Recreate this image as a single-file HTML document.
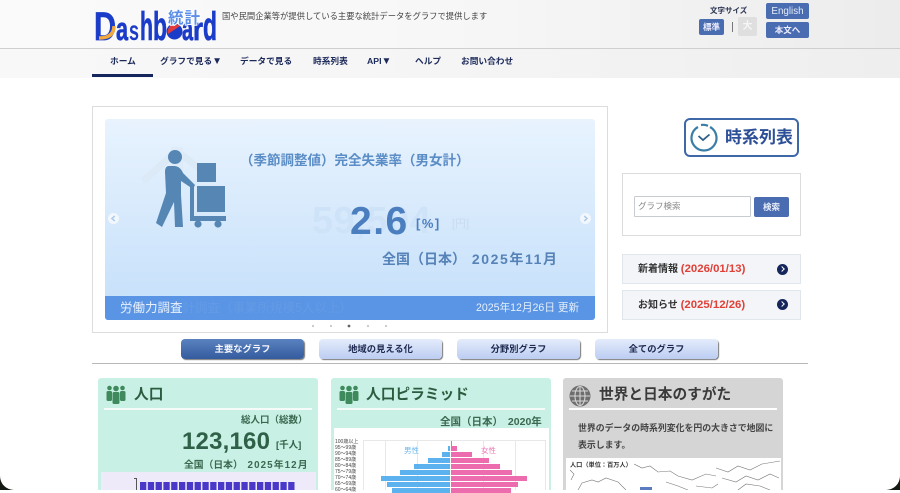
<!DOCTYPE html>
<html lang="ja"><head><meta charset="utf-8"><title>統計ダッシュボード</title>
<style>
html,body{margin:0;padding:0;background:#fff}
body{width:900px;height:490px;overflow:hidden;position:relative;font-family:"Liberation Sans","Noto Sans CJK JP",sans-serif;color:#333}
.a{position:absolute;white-space:nowrap}
.b{font-weight:700}
.nav{top:54px;font-size:8.7px;font-weight:700;color:#1c2a5a;line-height:14px}
.tab{top:339px;width:123px;height:20px;line-height:20px;text-align:center;font-size:9.3px;font-weight:700;color:#1f2a50;border-radius:4px;background:linear-gradient(#e4ecfb,#bccdf2);box-shadow:1px 1px 1px #777}
.card{top:378px;width:220px;height:112px;border-radius:3px 3px 0 0}
.hr{height:2px;background:#f4fbf9}
.ct{top:385px;font-size:14.7px;line-height:20px;color:#2c5c40;font-weight:700}
.news{left:622px;width:177px;height:28px;background:#f3f5f8;border:1px solid #dfe6ec;line-height:28px;font-size:10px;font-weight:700}
.news i{font-style:normal;color:#e04038;font-size:11.4px;margin-left:0}
.dot{position:absolute;left:777px;width:11px;height:11px;border-radius:50%;background:#14265c}
.dot:after{content:"";position:absolute;left:2.5px;top:3px;width:3px;height:3px;border:solid #fff;border-width:1.4px 1.4px 0 0;transform:rotate(45deg)}
.bar{position:absolute;height:5.2px}
.l{background:#5cb2ee}.r{background:#ec6cae}
.yl{position:absolute;left:335px;width:34px;font-size:5px;line-height:6px;color:#444;text-align:left}
.g{position:absolute;top:440px;width:1px;height:50px;background:#e8e8e8}
</style></head><body>

<!-- header -->
<div class="a" style="left:0;top:0;width:900px;height:48px;background:linear-gradient(90deg,#fafafa,#f7f7f7 50%,#ececec)"></div>
<div class="a" style="left:0;top:48px;width:900px;height:1px;background:#cfcfcf"></div>
<div class="a" style="left:0;top:49px;width:900px;height:29px;background:linear-gradient(90deg,#f8f8f8,#f5f5f5 50%,#eeeeee)"></div>

<!-- logo -->
<svg class="a" style="left:90px;top:6px" width="132" height="38" viewBox="0 0 132 38" font-family="Liberation Sans" font-weight="700" fill="#1b3cc8" stroke="#1b3cc8" stroke-width=".7">
<text x="4" y="34" font-size="40" textLength="22" lengthAdjust="spacingAndGlyphs">D</text>
<path d="M9 32 Q24 32 24 20" fill="none" stroke="#f0a840" stroke-width="3.500"/>
<text x="26" y="34" font-size="32" textLength="12" lengthAdjust="spacingAndGlyphs">a</text>
<text x="39" y="34" font-size="28" textLength="10" lengthAdjust="spacingAndGlyphs" stroke="none">s</text>
<text x="50" y="34" font-size="40" textLength="13" lengthAdjust="spacingAndGlyphs">h</text>
<text x="63" y="34" font-size="40" textLength="14" lengthAdjust="spacingAndGlyphs">b</text>
<circle cx="84.500" cy="25.500" r="8" fill="#1b3cc8" stroke="none"/><path d="M78 28 A7.500 7.500 0 0 1 90 20Z" fill="#e23b3b" stroke="none"/>
<text x="92" y="34" font-size="32" textLength="11" lengthAdjust="spacingAndGlyphs">a</text>
<text x="103" y="34" font-size="32" textLength="10" lengthAdjust="spacingAndGlyphs">r</text>
<text x="113" y="34" font-size="40" textLength="14" lengthAdjust="spacingAndGlyphs">d</text>
<text x="78" y="17" font-family="Noto Sans CJK JP" font-size="15.500" fill="#5b8fe8" stroke="#fff" stroke-width="2" paint-order="stroke" textLength="32">統計</text>
</svg>
<div class="a" style="left:222px;top:10px;font-size:8.300px;line-height:13px;color:#444">国や民間企業等が提供している主要な統計データをグラフで提供します</div>

<!-- header right -->
<div class="a b" style="left:710px;top:5px;font-size:7.500px;line-height:11px;color:#2a3350">文字サイズ</div>
<div class="a b" style="left:699px;top:19px;width:25px;height:16px;border-radius:2px;background:#4a6cb0;color:#eef;font-size:8.500px;line-height:16px;text-align:center">標準</div>
<div class="a" style="left:732px;top:22px;width:1px;height:10px;background:#777"></div>
<div class="a b" style="left:738px;top:17px;width:19px;height:19px;border-radius:2px;background:#dfdfdf;color:#f6f6f6;font-size:10px;line-height:19px;text-align:center">大</div>
<div class="a" style="left:766px;top:3px;width:43px;height:16px;border-radius:2px;background:#4a6cb0;color:#e4ecfa;font-size:9.800px;line-height:17px;text-align:center">English</div>
<div class="a b" style="left:766px;top:22px;width:43px;height:16px;border-radius:2px;background:#4a6cb0;color:#eef;font-size:8.500px;line-height:16px;text-align:center">本文へ</div>

<!-- nav -->
<div class="a nav" style="left:110px">ホーム</div>
<div class="a nav" style="left:160px">グラフで見る<span style="font-size:10px">▼</span></div>
<div class="a nav" style="left:240px">データで見る</div>
<div class="a nav" style="left:313px">時系列表</div>
<div class="a nav" style="left:367px">API<span style="font-size:10px">▼</span></div>
<div class="a nav" style="left:415px">ヘルプ</div>
<div class="a nav" style="left:461px">お問い合わせ</div>
<div class="a" style="left:92px;top:74px;width:61px;height:3px;background:#14265c"></div>

<!-- carousel -->
<div class="a" style="left:92px;top:106px;width:514px;height:225px;border:1px solid #dcdcdc;background:#fff"></div>
<div class="a" style="left:105px;top:119px;width:490px;height:201px;border-radius:3px;background:linear-gradient(#e8f3fe,#c4dffa);overflow:hidden"></div>

<!-- ghost layer -->
<svg class="a" style="left:105px;top:119px" width="490" height="201">
<path d="M38 62 L72 32 L110 62" fill="none" stroke="#dce9f7" stroke-width="7"/>
<rect x="66" y="28" width="12" height="40" fill="#dfebf8"/>
</svg>
<div class="a b" style="left:312px;top:199px;font-size:38px;line-height:44px;color:#cfe3f8;letter-spacing:.5px">59,504</div>
<div class="a" style="left:452px;top:217px;font-size:11px;line-height:14px;color:#c8dbf0">[円]</div>

<!-- worker icon -->
<svg class="a" style="left:150px;top:145px" width="82" height="86" viewBox="0 0 82 86">
<g fill="#5586b4">
<circle cx="25" cy="12" r="7"/>
<path d="M19 21 Q15 21 15 27 L16 48 L6 78 L12 82 L24 57 L25 82 L33 82 L31 50 L31 36 L43 44 L45 40 L33 28 Q30 21 24 21Z"/>
<rect x="47" y="18" width="19" height="19"/>
<rect x="47" y="41" width="28" height="26"/>
<rect x="40" y="41" width="4" height="33"/>
<rect x="40" y="71" width="36" height="5"/>
<circle cx="48" cy="79" r="3.600"/><circle cx="68" cy="79" r="3.600"/>
</g></svg>

<div class="a b" style="left:240px;top:152px;font-size:13.500px;line-height:18px;color:#5a8cc6">（季節調整値）完全失業率（男女計）</div>
<div class="a b" style="left:350px;top:199px;font-size:39px;line-height:46px;color:#4b7ebf;letter-spacing:1.500px">2.6</div>
<div class="a b" style="left:416px;top:216px;font-size:13px;line-height:16px;color:#4b7ebf;letter-spacing:1.500px">[%]</div>
<div class="a" style="left:382px;top:250px;font-size:14px;line-height:18px;color:#5682b8;font-weight:700">全国（日本） <span style="margin-left:2px;letter-spacing:1.600px">2025年11月</span></div>

<div class="a" style="left:105px;top:296px;width:490px;height:24px;background:#5a94e4;border-radius:0 0 3px 3px"></div>
<div class="a" style="left:120px;top:300px;font-size:12.500px;line-height:17px;color:#639be6">毎月勤労統計調査（事業所規模5人以上）</div>
<div class="a" style="left:120px;top:300px;font-size:12.500px;line-height:17px;color:#e6f0fc">労働力調査</div>
<div class="a" style="left:476px;top:301px;font-size:10.600px;line-height:15px;color:#e6f0fc">2025年12月26日 更新</div>

<!-- arrows -->
<svg class="a" style="left:107px;top:212px" width="13" height="13"><circle cx="6.500" cy="6.500" r="5.500" fill="#f2f7fd"/><path d="M7.800 4 L5 6.500 L7.800 9" fill="none" stroke="#a9c8ea" stroke-width="1.500"/></svg>
<svg class="a" style="left:579px;top:212px" width="13" height="13"><circle cx="6.500" cy="6.500" r="5.500" fill="#f2f7fd"/><path d="M5.200 4 L8 6.500 L5.200 9" fill="none" stroke="#a9c8ea" stroke-width="1.500"/></svg>

<!-- dots -->
<svg class="a" style="left:305px;top:322px" width="90" height="8">
<circle cx="8" cy="4" r="1.100" fill="#c6c6c6"/><circle cx="26" cy="4" r="1.100" fill="#c6c6c6"/><circle cx="44" cy="4" r="1.400" fill="#666"/><circle cx="63" cy="4" r="1.100" fill="#c6c6c6"/><circle cx="81" cy="4" r="1.100" fill="#c6c6c6"/>
</svg>

<!-- tabs -->
<div class="a tab" style="left:181px;background:linear-gradient(#5a82c0,#345c9e);color:#f4f6fc">主要なグラフ</div>
<div class="a tab" style="left:319px">地域の見える化</div>
<div class="a tab" style="left:457px">分野別グラフ</div>
<div class="a tab" style="left:595px">全てのグラフ</div>
<div class="a" style="left:92px;top:363px;width:716px;height:1px;background:#b8b8b8"></div>

<!-- right column -->
<div class="a" style="left:684px;top:118px;width:111px;height:35px;border:2px solid #3f68a8;border-radius:6px;background:#fff"></div>
<svg class="a" style="left:689px;top:123px" width="30" height="30" viewBox="0 0 30 30">
<path d="M9 4 A12.500 12.500 0 1 0 21 4" fill="none" stroke="#3a7ea8" stroke-width="2.200"/>
<path d="M12 2 A12.500 12.500 0 0 1 19 2.800" fill="none" stroke="#3a7ea8" stroke-width="2.200"/>
<path d="M9.500 13 L14 17 L20.500 11.500" fill="none" stroke="#2f5f88" stroke-width="1.800"/>
</svg>
<div class="a b" style="left:725px;top:128px;font-size:17px;line-height:20px;color:#2c4f98">時系列表</div>

<div class="a" style="left:622px;top:173px;width:177px;height:61px;border:1px solid #dcdcdc;background:#fff"></div>
<div class="a" style="left:634px;top:196px;width:112px;height:19px;border:1px solid #c8ccd0;padding-left:3px;font-size:8.500px;line-height:19px;color:#888;border-radius:1px;background:#fff">グラフ検索</div>
<div class="a b" style="left:754px;top:197px;width:35px;height:20px;background:#4a6cb0;border-radius:2px;color:#e8eefa;font-size:8.500px;line-height:20px;text-align:center">検索</div>

<div class="a news" style="top:254px"><span style="margin-left:15px">新着情報</span> <i>(2026/01/13)</i></div>
<div class="dot" style="top:264px"></div>
<div class="a news" style="top:290px"><span style="margin-left:15px">お知らせ</span> <i>(2025/12/26)</i></div>
<div class="dot" style="top:299px"></div>

<!-- card 1 -->
<div class="a card" style="left:98px;background:#c9f0e4"></div>
<svg class="a" style="left:106px;top:385px" width="20" height="19" viewBox="0 0 20 19"><g fill="#3f8a5c"><circle cx="3.500" cy="3" r="2.300"/><circle cx="10" cy="3.500" r="2.800"/><circle cx="16.500" cy="3" r="2.300"/><rect x="0.500" y="6" width="5.500" height="10" rx="1.500"/><rect x="6.500" y="7" width="7" height="12" rx="1.500"/><rect x="14" y="6" width="5.500" height="10" rx="1.500"/></g></svg>
<div class="a ct" style="left:134px">人口</div>
<div class="a hr" style="left:104px;top:408px;width:208px"></div>
<div class="a b" style="left:241px;top:414px;font-size:9.500px;line-height:14px;color:#3a6850">総人口（総数）</div>
<div class="a b" style="left:182px;top:428px;font-size:24px;line-height:28px;color:#2f6048;letter-spacing:.2px">123,160</div>
<div class="a b" style="left:276px;top:439px;font-size:9.500px;line-height:14px;color:#2f6048">[千人]</div>
<div class="a b" style="left:184px;top:459px;font-size:9.800px;line-height:14px;color:#3a6850">全国（日本） <span style="margin-left:2px;letter-spacing:1.100px">2025年12月</span></div>
<div class="a" style="left:101px;top:472px;width:215px;height:18px;background:#eeeaf9"></div>
<div class="a" style="left:136px;top:478px;width:1px;height:12px;background:#555"></div>
<div class="a" style="left:134px;top:478px;width:3px;height:1px;background:#555"></div>
<svg class="a" style="left:140px;top:482px" width="156" height="8">
<g fill="#4a38c8">
<rect x="0" width="6.300" height="8"/><rect x="7.800" width="6.300" height="8"/><rect x="15.600" width="6.300" height="8"/><rect x="23.400" width="6.300" height="8"/><rect x="31.200" width="6.300" height="8"/><rect x="39" width="6.300" height="8"/><rect x="46.800" width="6.300" height="8"/><rect x="54.600" width="6.300" height="8"/><rect x="62.400" width="6.300" height="8"/><rect x="70.200" width="6.300" height="8"/><rect x="78" width="6.300" height="8"/><rect x="85.800" width="6.300" height="8"/><rect x="93.600" width="6.300" height="8"/><rect x="101.400" width="6.300" height="8"/><rect x="109.200" width="6.300" height="8"/><rect x="117" width="6.300" height="8"/><rect x="124.800" width="6.300" height="8"/><rect x="132.600" width="6.300" height="8"/><rect x="140.400" width="6.300" height="8"/><rect x="148.200" width="6.300" height="8"/>
</g></svg>

<!-- card 2 -->
<div class="a card" style="left:331px;background:#c9f0e4"></div>
<svg class="a" style="left:339px;top:385px" width="20" height="19" viewBox="0 0 20 19"><g fill="#3f8a5c"><circle cx="3.500" cy="3" r="2.300"/><circle cx="10" cy="3.500" r="2.800"/><circle cx="16.500" cy="3" r="2.300"/><rect x="0.500" y="6" width="5.500" height="10" rx="1.500"/><rect x="6.500" y="7" width="7" height="12" rx="1.500"/><rect x="14" y="6" width="5.500" height="10" rx="1.500"/></g></svg>
<div class="a ct" style="left:366px">人口ピラミッド</div>
<div class="a hr" style="left:337px;top:408px;width:208px"></div>
<div class="a b" style="left:440px;top:415px;font-size:10.500px;line-height:14px;color:#3a6850">全国（日本） <span style="margin-left:2px">2020年</span></div>
<div class="a" style="left:334px;top:428px;width:215px;height:62px;background:#fff"></div>
<div class="a" style="left:363px;top:440px;width:182px;height:1px;background:#e8e8e8"></div>
<div class="g" style="left:363px"></div><div class="g" style="left:385px"></div><div class="g" style="left:417px"></div><div class="g" style="left:483px"></div><div class="g" style="left:515px"></div><div class="g" style="left:545px"></div>
<div class="yl" style="top:439px">100歳以上</div>
<div class="yl" style="top:445px">95～99歳</div>
<div class="yl" style="top:451px">90～94歳</div>
<div class="yl" style="top:457px">85～89歳</div>
<div class="yl" style="top:463px">80～84歳</div>
<div class="yl" style="top:469px">75～79歳</div>
<div class="yl" style="top:475px">70～74歳</div>
<div class="yl" style="top:481px">65～69歳</div>
<div class="yl" style="top:487px">60～64歳</div>
<div class="bar l" style="left:448px;width:2px;top:446px"></div><div class="bar r" style="left:451px;width:6px;top:446px"></div>
<div class="bar r" style="left:451px;width:.8px;top:441px"></div>
<div class="bar l" style="left:442px;width:8px;top:452px"></div><div class="bar r" style="left:451px;width:21px;top:452px"></div>
<div class="bar l" style="left:428px;width:22px;top:458px"></div><div class="bar r" style="left:451px;width:38px;top:458px"></div>
<div class="bar l" style="left:414px;width:36px;top:464px"></div><div class="bar r" style="left:451px;width:49px;top:464px"></div>
<div class="bar l" style="left:400px;width:50px;top:470px"></div><div class="bar r" style="left:451px;width:61px;top:470px"></div>
<div class="bar l" style="left:381px;width:69px;top:476px"></div><div class="bar r" style="left:451px;width:76px;top:476px"></div>
<div class="bar l" style="left:387px;width:63px;top:482px"></div><div class="bar r" style="left:451px;width:67px;top:482px"></div>
<div class="bar l" style="left:392px;width:58px;top:488px"></div><div class="bar r" style="left:451px;width:60px;top:488px"></div>
<div class="a" style="left:404px;top:445px;font-size:7.500px;line-height:11px;color:#6cb8ee">男性</div>
<div class="a" style="left:481px;top:445px;font-size:7.500px;line-height:11px;color:#ec78b4">女性</div>

<!-- card 3 -->
<div class="a card" style="left:563px;background:#d5d5d5"></div>
<svg class="a" style="left:569px;top:385px" width="22" height="22" viewBox="0 0 22 22"><circle cx="11" cy="11" r="10.500" fill="#6e6e6e"/><g fill="none" stroke="#d5d5d5" stroke-width="1.100"><ellipse cx="11" cy="11" rx="5" ry="9.500"/><path d="M11 1V21M1 11H21M3 6H19M3 16H19"/></g></svg>
<div class="a ct" style="left:599px;color:#3a3a3a">世界と日本のすがた</div>
<div class="a hr" style="left:569px;top:408px;width:208px;background:#fff"></div>
<div class="a b" style="left:578px;top:419.500px;font-size:8.900px;line-height:17px;color:#444;white-space:normal;width:199px">世界のデータの時系列変化を円の大きさで地図に表示します。</div>
<div class="a" style="left:566px;top:458px;width:215px;height:32px;background:#fff"></div>
<div class="a b" style="left:570px;top:461px;font-size:6.200px;line-height:9px;color:#333">人口（単位：百万人）</div>
<svg class="a" style="left:566px;top:458px" width="215" height="32" fill="none" stroke="#777" stroke-width=".6">
<path d="M5 22 L8 16 L4 12 M12 32 L16 25 L26 22 L32 24 L40 20 L52 24 L60 32"/>
<path d="M68 6 L76 10 L84 8 L92 14 L104 13 L112 18 L126 22 L140 16 L150 18"/>
<path d="M150 10 L162 14 L172 8 L184 12 L196 6 L214 3"/>
<path d="M156 20 L170 24 L180 18 L192 22 L204 16 L213 20 M172 32 L180 26 L194 28 L204 32"/>
<path d="M100 24 L112 28 L122 32 M130 28 L146 30 L152 26"/>
</svg>
<div class="a" style="left:640px;top:487px;width:12px;height:3px;background:#5b7cc0"></div>

<!-- rounded window corners -->
<svg class="a" style="left:0;top:476px" width="14" height="14"><path d="M0 0 A14 14 0 0 0 14 14 L0 14Z" fill="#151a14"/></svg>
<svg class="a" style="left:886px;top:476px" width="14" height="14"><path d="M14 0 A14 14 0 0 1 0 14 L14 14Z" fill="#151a14"/></svg>
</body></html>
